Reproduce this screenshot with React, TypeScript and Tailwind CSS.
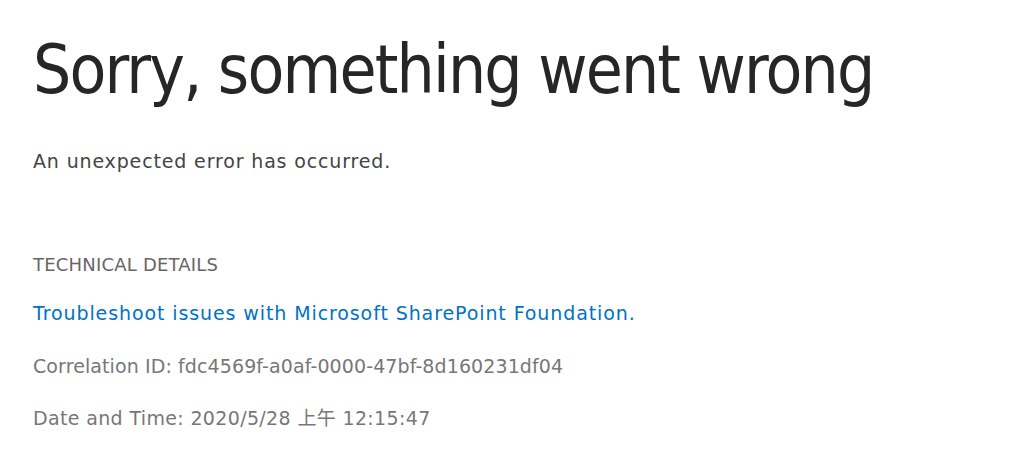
export default function App() {
  return (
    <main
      className="min-h-screen w-full bg-white pl-[33px] pt-[30px]"
      style={{ fontFamily: '"DejaVu Sans", "Noto Sans CJK SC", sans-serif' }}
    >
      <h1
        className="text-[67px] leading-[80px] text-[#262626] tracking-[-1.8px]"
        style={{ fontStretch: 'condensed' }}
      >
        Sorry, something went wrong
      </h1>
      <p className="mt-[39px] text-[19px] leading-[24px] text-[#444] tracking-[0.85px]">
        An unexpected error has occurred.
      </p>
      <div className="mt-[80px] flex flex-col">
        <div className="text-[18px] leading-[24px] text-[#666] uppercase tracking-[0.2px]">Technical Details</div>
        <a href="#" className="mt-[24px] text-[19px] leading-[24px] text-[#0072c6] tracking-[0.9px]">
          Troubleshoot issues with Microsoft SharePoint Foundation.
        </a>
        <div className="mt-[29px] text-[19px] leading-[24px] text-[#777] tracking-[0.1px]">
          Correlation ID: fdc4569f-a0af-0000-47bf-8d160231df04
        </div>
        <div className="mt-[28px] text-[19px] leading-[24px] text-[#777] tracking-[0.35px]">
          Date and Time: 2020/5/28 上午 12:15:47
        </div>
      </div>
    </main>
  );
}
